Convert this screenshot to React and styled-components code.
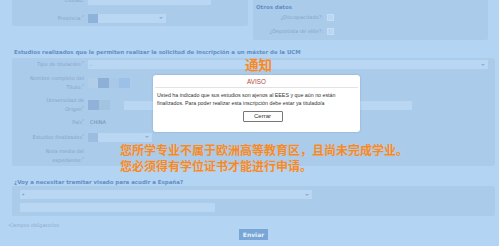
import React from 'react';
import styled, { createGlobalStyle } from 'styled-components';

const GlobalStyle = createGlobalStyle`
  html, body {
    margin: 0;
    padding: 0;
    background: #b4d4f3;
    overflow: hidden;
  }
  body {
    font-family: "DejaVu Sans", Verdana, sans-serif;
  }
`;

const Page = styled.div`
  position: relative;
  width: 499px;
  height: 246px;
  overflow: hidden;
  background: #b4d4f3;
`;

const Form = styled.div`
  display: flex;
  flex-direction: column;
  margin-top: -3px;
  padding: 0 4px 0 12px;
`;

const TopRow = styled.div`
  display: grid;
  grid-template-columns: 236px 235px;
  column-gap: 5px;
  align-items: start;
`;

const Panel = styled.div`
  background: #abcbeb;
  border-radius: 2px;
  display: flex;
  flex-direction: column;
  gap: ${(p) => p.$gap || 0}px;
  padding: ${(p) => p.$pad || '2px 0'};
  margin-top: ${(p) => p.$mt || 0}px;
`;

const Heading = styled.div`
  font-size: 5.45px;
  font-weight: bold;
  color: #6190c4;
  line-height: 8px;
  padding: ${(p) => p.$pad || '0 2px'};
  white-space: nowrap;
`;

const Row = styled.div`
  display: grid;
  grid-template-columns: ${(p) => p.$label || '72px'} 1fr;
  column-gap: 4px;
  align-items: center;
  height: ${(p) => p.$h || 12}px;
`;

const Label = styled.div`
  font-size: 5px;
  line-height: 9px;
  color: #87a4c6;
  text-align: right;
  white-space: pre-line;
  sup {
    font-size: 4px;
    vertical-align: top;
    line-height: 6px;
  }
`;

const Field = styled.div`
  display: flex;
  align-items: center;
  height: 9px;
  width: ${(p) => p.$w}px;
  background: ${(p) => (p.$plain ? 'transparent' : '#b9d6f2')};
  font-size: 5px;
  color: #7f9cc0;
`;

const Arrow = styled.span`
  margin-left: auto;
  margin-right: 3px;
  width: 0;
  height: 0;
  border-left: 2px solid transparent;
  border-right: 2px solid transparent;
  border-top: 2px solid #8fb0d4;
`;

const Block = styled.span`
  display: inline-block;
  width: ${(p) => p.$w}px;
  height: ${(p) => p.$h || 10}px;
  background: ${(p) => p.$c};
  flex-shrink: 0;
`;

const Blocks = styled.div`
  display: flex;
  align-items: center;
`;

const Check = styled.span`
  display: inline-block;
  width: 5px;
  height: 5px;
  border: 1px solid #c5def5;
  background: #b9d6f2;
`;

const Value = styled.span`
  font-size: 5px;
  color: #6f8db3;
  padding-left: 2px;
`;

const FieldsRow = styled.div`
  display: flex;
  align-items: center;
  gap: 14px;
`;

const Note = styled.div`
  font-size: 4.8px;
  line-height: 6px;
  color: #8eaacb;
  margin: 7px 0 0 -4px;
  sup {
    font-size: 3.5px;
    vertical-align: top;
  }
`;

const Submit = styled.div`
  align-self: center;
  padding: 1px 4px;
  background: #78a6d6;
  color: #e6f0fa;
  font-size: 6px;
  font-weight: bold;
  line-height: 9px;
`;

const VisaPanel = styled(Panel)`
  gap: 4px;
  padding: 4px 8px;
`;

const Dialog = styled.div`
  position: absolute;
  left: 153px;
  top: 75px;
  width: 207px;
  height: 57px;
  background: #fff;
  border-radius: 3px;
  box-shadow: 0 0 2px rgba(80, 110, 150, 0.4);
  display: flex;
  flex-direction: column;
  font-family: "Liberation Sans", Arial, sans-serif;
`;

const DialogTitle = styled.div`
  height: 12px;
  line-height: 13px;
  text-align: center;
  font-size: 6.3px;
  color: #b24a3a;
  border-bottom: 1px solid #e3e3e3;
  margin: 0 2px;
`;

const DialogText = styled.div`
  font-size: 5.3px;
  line-height: 8px;
  color: #333;
  padding: 3px 4px 0;
`;

const CloseButton = styled.div`
  align-self: center;
  margin: 4px 0 0 12px;
  width: 38px;
  height: 9px;
  border: 1px solid #777;
  border-radius: 1px;
  font-size: 6px;
  line-height: 9px;
  text-align: center;
  color: #333;
  background: #fdfdfd;
`;

const Notice = styled.div`
  position: absolute;
  left: ${(p) => p.$x}px;
  top: ${(p) => p.$y}px;
  font-family: "Noto Sans CJK SC", sans-serif;
  font-weight: bold;
  font-size: ${(p) => p.$size}px;
  line-height: ${(p) => p.$lh || p.$size}px;
  color: #f28a2c;
  white-space: nowrap;
  text-shadow: 0 0 1px rgba(255, 210, 160, 0.6);
`;

export default function App() {
  return (
    <Page>
      <GlobalStyle />
      <Form>
        <TopRow>
          <Panel $pad="0 0 2px" $mt={-3} $gap={6}>
            <Row>
              <Label>Ciudad:</Label>
              <Field $w={123} />
            </Row>
            <Row>
              <Label>
                Provincia:<sup>*</sup>
              </Label>
              <Field $w={78}>
                <Block $w={10} $h={9} $c="#8eb2da" />
                <Arrow />
              </Field>
            </Row>
          </Panel>
          <Panel $pad="6px 0 2px">
            <Heading $pad="0 0 0 3px">Otros datos</Heading>
            <Row $label="70px" $h={13}>
              <Label>¿Discapacitado?:</Label>
              <Check />
            </Row>
            <Row $label="70px" $h={14}>
              <Label>¿Deportista de elite?:</Label>
              <Check />
            </Row>
          </Panel>
        </TopRow>

        <Heading $pad="8px 2px 0">
          Estudios realizados que le permiten realizar la solicitud de inscripción a un máster de la UCM
        </Heading>
        <Panel $pad="0" $mt={2}>
          <Row $h={13}>
            <Label>
              Tipo de titulación:<sup>*</sup>
            </Label>
            <Field $w={400}>
              <Value>-</Value>
              <Arrow />
            </Field>
          </Row>
          <Row $h={24}>
            <Label>
              Nombre completo del{'\n'}Título:<sup>*</sup>
            </Label>
            <Blocks>
              <Block $w={10} $c="#b0cdea" />
              <Block $w={11} $c="#8eb0d6" />
              <Block $w={10} $c="#a9c8e8" />
              <Block $w={11} $c="#9cc1e8" />
            </Blocks>
          </Row>
          <Row $h={20}>
            <Label>
              Universidad de{'\n'}Origen<sup>*</sup>
            </Label>
            <FieldsRow>
              <Blocks>
                <Block $w={11} $c="#90b1d8" />
                <Block $w={11} $c="#a4c3e3" />
              </Blocks>
              <Field $w={288} />
            </FieldsRow>
          </Row>
          <Row $h={14}>
            <Label>
              País<sup>*</sup>
            </Label>
            <Field $w={60} $plain>
              <Value>CHINA</Value>
            </Field>
          </Row>
          <Row $h={16}>
            <Label>
              Estudios finalizados<sup>*</sup>
            </Label>
            <Field $w={64}>
              <Block $w={10} $h={9} $c="#9dbde0" />
              <Arrow />
            </Field>
          </Row>
          <Row $h={21}>
            <Label>
              Nota media del{'\n'}expediente:<sup>*</sup>
            </Label>
            <Field $w={0} $plain />
          </Row>
        </Panel>

        <Heading $pad="12px 2px 0">¿Voy a necesitar tramitar visado para acudir a España?</Heading>
        <VisaPanel>
          <Field $w={292}>
            <Value>*</Value>
            <Arrow />
          </Field>
          <Field $w={195} />
        </VisaPanel>

        <Note>
          <sup>*</sup>Campos obligatorios
        </Note>
        <Submit>Enviar</Submit>
      </Form>

      <Notice $x={245} $y={58} $size={13.5}>
        通知
      </Notice>

      <Dialog>
        <DialogTitle>AVISO</DialogTitle>
        <DialogText>
          Usted ha indicado que sus estudios son ajenos al EEES y que aún no están finalizados. Para poder
          realizar esta inscripción debe estar ya titulado/a
        </DialogText>
        <CloseButton>Cerrar</CloseButton>
      </Dialog>

      <Notice $x={120} $y={142} $size={12} $lh={15.5}>
        您所学专业不属于欧洲高等教育区，且尚未完成学业。
        <br />
        您必须得有学位证书才能进行申请。
      </Notice>
    </Page>
  );
}
